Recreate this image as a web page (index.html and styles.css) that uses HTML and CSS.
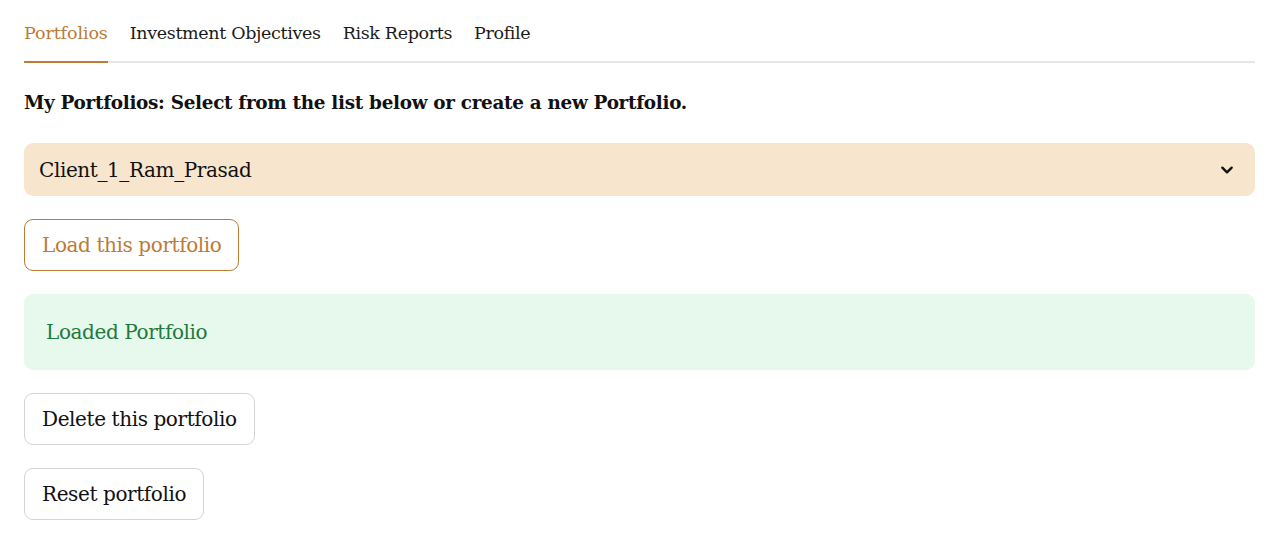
FILE: index.html
```html
<!DOCTYPE html>
<html>
<head>
<meta charset="utf-8">
<link rel="stylesheet" href="styles.css">
</head>
<body>
<div class="page">
  <nav class="tabs">
    <div class="tab active">Portfolios</div>
    <div class="tab">Investment Objectives</div>
    <div class="tab">Risk Reports</div>
    <div class="tab">Profile</div>
  </nav>
  <h3 class="heading">My Portfolios: Select from the list below or create a new Portfolio.</h3>
  <div class="select">
    <span class="select-value">Client_1_Ram_Prasad</span>
    <svg class="chevron" width="16" height="16" viewBox="0 0 24 24"><path d="M5 8.5l7 7 7-7" fill="none" stroke="#111" stroke-width="3.6" stroke-linecap="round" stroke-linejoin="round"/></svg>
  </div>
  <div class="row"><button class="btn btn-primary">Load this portfolio</button></div>
  <div class="alert">Loaded Portfolio</div>
  <div class="row"><button class="btn">Delete this portfolio</button></div>
  <div class="row"><button class="btn">Reset portfolio</button></div>
</div>
</body>
</html>
```
FILE: styles.css
```css
html, body {
  margin: 0;
  padding: 0;
  background: #ffffff;
}
body {
  font-family: "DejaVu Serif", "Liberation Serif", serif;
  color: #111;
}
.page {
  padding: 14px 15px 0 24px;
  display: flex;
  flex-direction: column;
}
.tabs {
  display: flex;
  gap: 22px;
  border-bottom: 2px solid #e6e6e6;
}
.tab {
  font-size: 17.5px;
  line-height: 24px;
  padding: 7px 0 16px;
  margin-bottom: -2px;
  border-bottom: 2px solid transparent;
  color: #1a1a1a;
  letter-spacing: -0.35px;
}
.tab.active {
  color: #bd7a35;
  border-bottom-color: #bd7a35;
  letter-spacing: -0.1px;
}
.heading {
  margin: 27px 0 0;
  font-size: 18.4px;
  line-height: 26px;
  font-weight: bold;
  letter-spacing: -0.3px;
}
.select {
  margin-top: 27px;
  height: 53px;
  background: #f7e6cd;
  border-radius: 9px;
  display: flex;
  align-items: center;
  justify-content: space-between;
  padding: 0 20px 0 15px;
}
.select-value {
  font-size: 20px;
  letter-spacing: -0.4px;
}
.chevron {
  display: block;
}
.row {
  display: flex;
}
.btn {
  font-family: inherit;
  background: #fff;
  border: 1px solid #d4d4d4;
  border-radius: 9px;
  height: 52px;
  padding: 0 17px;
  font-size: 20px;
  color: #111;
  letter-spacing: -0.4px;
  margin-top: 23px;
}
.btn-primary {
  border-color: #bd7a35;
  color: #bd7a35;
}
.alert {
  margin-top: 23px;
  background: #e7f8ec;
  border-radius: 9px;
  height: 76px;
  display: flex;
  align-items: center;
  padding-left: 22px;
  font-size: 20px;
  color: #1d7a3d;
  letter-spacing: -0.4px;
}
```
